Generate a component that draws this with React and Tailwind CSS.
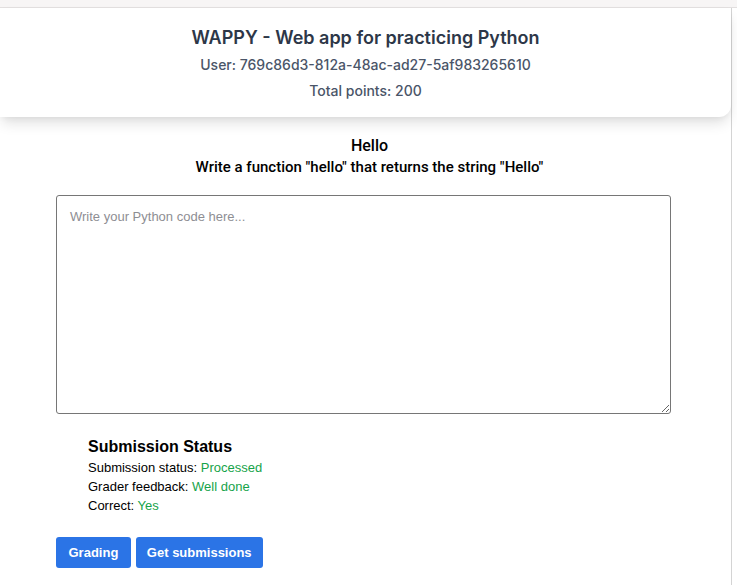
import React from "react";

export default function App() {
  return (
    <div className="w-[737px] h-[585px] bg-white overflow-hidden" style={{ fontFamily: "'Liberation Sans', Arial, sans-serif" }}>
      <div className="h-[8px] bg-[#f7f5f5] border-b border-[#e2dfdf]" />
      <div className="flex">
        <div className="w-[732px] h-[577px] border-r border-[#d4d4d4]">
          <div className="w-[731px] h-[109px] bg-white rounded-br-xl shadow-[0_8px_14px_-2px_rgba(0,0,0,0.12),0_3px_6px_-2px_rgba(0,0,0,0.06)] flex flex-col items-center pt-[18px]" style={{ fontFamily: "Inter, 'Noto Sans', sans-serif" }}>
            <h1 className="text-[18px] leading-[24px] font-semibold text-[#2d3748]">WAPPY - Web app for practicing Python</h1>
            <p className="mt-[5px] text-[14px] leading-[20px] font-medium text-[#4a5568]">User: 769c86d3-812a-48ac-ad27-5af983265610</p>
            <p className="mt-[6px] text-[14px] leading-[20px] font-medium text-[#4a5568]">Total points: 200</p>
          </div>
          <div className="flex flex-col items-center mt-[19px] pl-[8px] text-black" style={{ fontFamily: "Roboto, 'Liberation Sans', sans-serif" }}>
            <h2 className="text-[16px] leading-[20px] font-medium">Hello</h2>
            <p className="mt-[2px] text-[15px] leading-[18px] font-medium">Write a function "hello" that returns the string "Hello"</p>
          </div>
          <div className="pl-[56px] mt-[19px]">
            <textarea
              className="block w-[615px] h-[219px] border border-[#767676] rounded-[3px] px-[13px] py-[12px] text-[13px] leading-[18px] placeholder:text-[#8e8e93] outline-none"
              placeholder="Write your Python code here..."
              style={{ fontFamily: "'Liberation Sans', Arial, sans-serif" }}
            />
          </div>
          <div className="pl-[88px] mt-[23px]">
            <h3 className="text-[16px] leading-[20px] font-bold">Submission Status</h3>
            <p className="text-[13px] leading-[19px] mt-[1px]">Submission status: <span className="text-[#16a34a]">Processed</span></p>
            <p className="text-[13px] leading-[19px]">Grader feedback: <span className="text-[#16a34a]">Well done</span></p>
            <p className="text-[13px] leading-[19px]">Correct: <span className="text-[#16a34a]">Yes</span></p>
          </div>
          <div className="pl-[56px] mt-[22px] flex gap-[5px]">
            <button className="h-[31px] px-[12.5px] rounded-[3px] bg-[#2b74e6] text-white text-[13px] font-bold">Grading</button>
            <button className="h-[31px] px-[11px] rounded-[3px] bg-[#2b74e6] text-white text-[13px] font-bold">Get submissions</button>
          </div>
        </div>
      </div>
    </div>
  );
}
